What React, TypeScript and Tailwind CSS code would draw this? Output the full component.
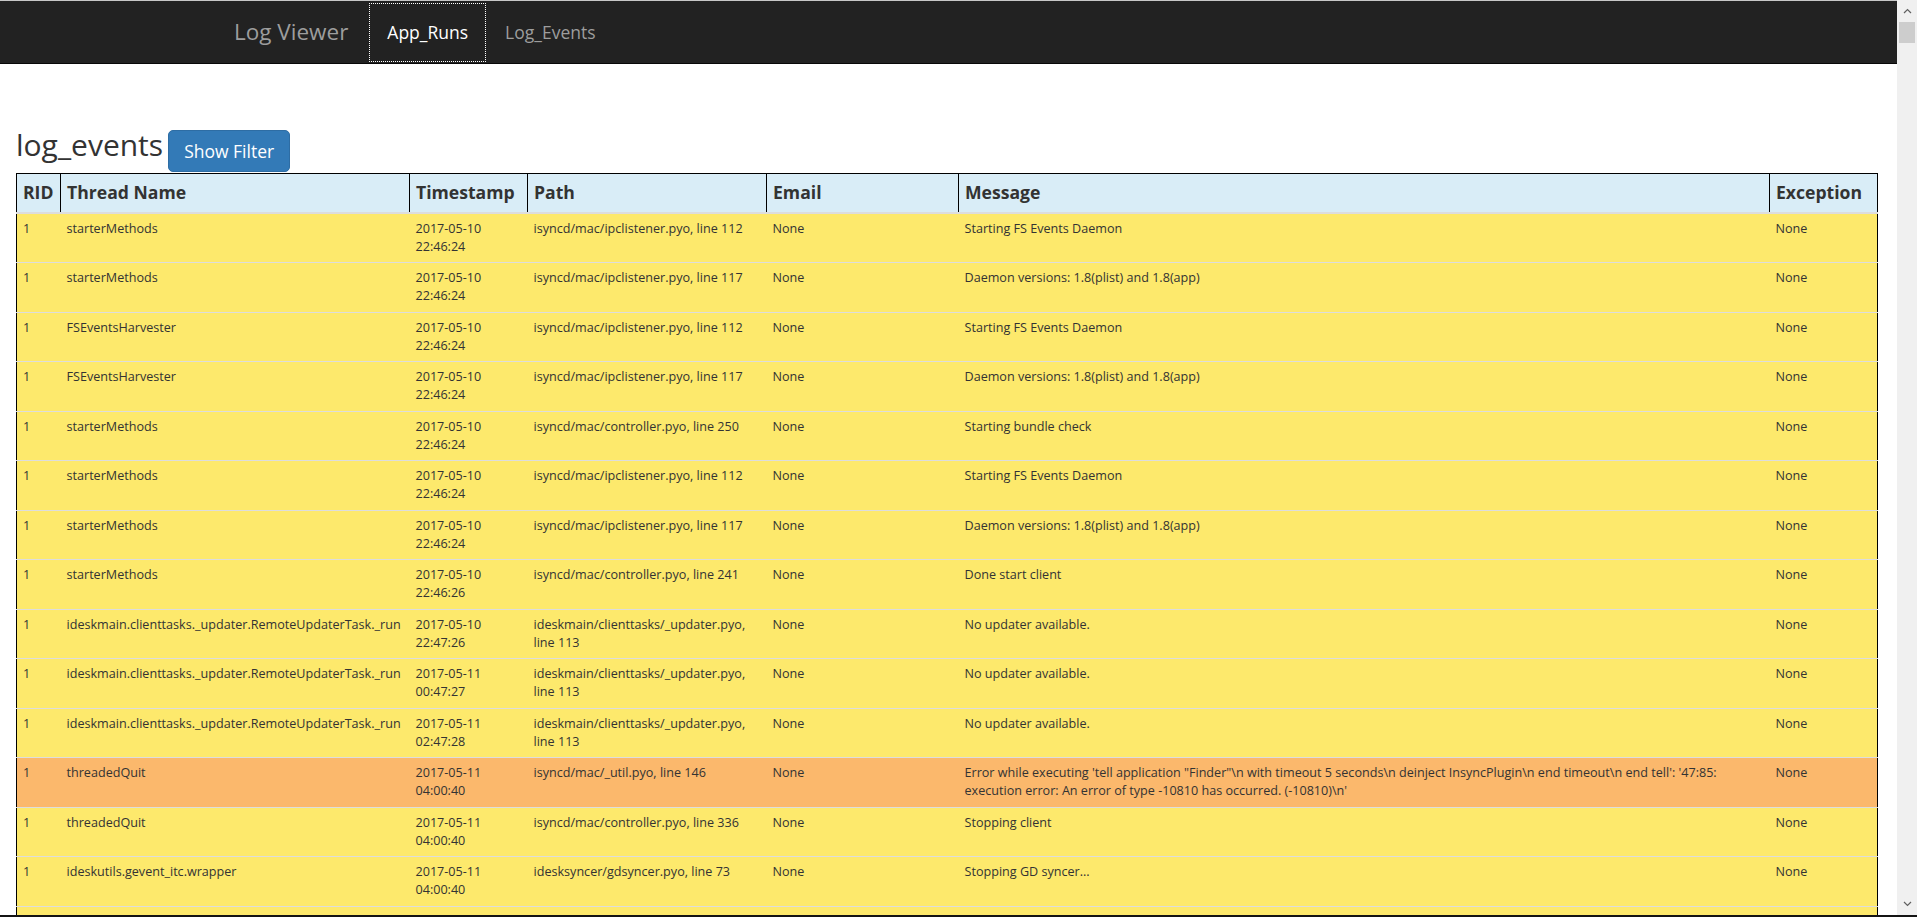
import React from "react";

type LogRow = {
  rid: number;
  thread: string;
  date: string;
  time: string;
  path: string;
  email: string;
  message: string;
  exception: string;
  error?: boolean;
};

const UPDATER = "ideskmain.clienttasks._updater.RemoteUpdaterTask._run";

const ROWS: LogRow[] = [
  { rid: 1, thread: "starterMethods", date: "2017-05-10", time: "22:46:24", path: "isyncd/mac/ipclistener.pyo, line 112", email: "None", message: "Starting FS Events Daemon", exception: "None" },
  { rid: 1, thread: "starterMethods", date: "2017-05-10", time: "22:46:24", path: "isyncd/mac/ipclistener.pyo, line 117", email: "None", message: "Daemon versions: 1.8(plist) and 1.8(app)", exception: "None" },
  { rid: 1, thread: "FSEventsHarvester", date: "2017-05-10", time: "22:46:24", path: "isyncd/mac/ipclistener.pyo, line 112", email: "None", message: "Starting FS Events Daemon", exception: "None" },
  { rid: 1, thread: "FSEventsHarvester", date: "2017-05-10", time: "22:46:24", path: "isyncd/mac/ipclistener.pyo, line 117", email: "None", message: "Daemon versions: 1.8(plist) and 1.8(app)", exception: "None" },
  { rid: 1, thread: "starterMethods", date: "2017-05-10", time: "22:46:24", path: "isyncd/mac/controller.pyo, line 250", email: "None", message: "Starting bundle check", exception: "None" },
  { rid: 1, thread: "starterMethods", date: "2017-05-10", time: "22:46:24", path: "isyncd/mac/ipclistener.pyo, line 112", email: "None", message: "Starting FS Events Daemon", exception: "None" },
  { rid: 1, thread: "starterMethods", date: "2017-05-10", time: "22:46:24", path: "isyncd/mac/ipclistener.pyo, line 117", email: "None", message: "Daemon versions: 1.8(plist) and 1.8(app)", exception: "None" },
  { rid: 1, thread: "starterMethods", date: "2017-05-10", time: "22:46:26", path: "isyncd/mac/controller.pyo, line 241", email: "None", message: "Done start client", exception: "None" },
  { rid: 1, thread: UPDATER, date: "2017-05-10", time: "22:47:26", path: "ideskmain/clienttasks/_updater.pyo, line 113", email: "None", message: "No updater available.", exception: "None" },
  { rid: 1, thread: UPDATER, date: "2017-05-11", time: "00:47:27", path: "ideskmain/clienttasks/_updater.pyo, line 113", email: "None", message: "No updater available.", exception: "None" },
  { rid: 1, thread: UPDATER, date: "2017-05-11", time: "02:47:28", path: "ideskmain/clienttasks/_updater.pyo, line 113", email: "None", message: "No updater available.", exception: "None" },
  {
    rid: 1,
    thread: "threadedQuit",
    date: "2017-05-11",
    time: "04:00:40",
    path: "isyncd/mac/_util.pyo, line 146",
    email: "None",
    message:
      "Error while executing 'tell application \"Finder\"\\n with timeout 5 seconds\\n deinject InsyncPlugin\\n end timeout\\n end tell': '47:85: execution error: An error of type -10810 has occurred. (-10810)\\n'",
    exception: "None",
    error: true,
  },
  { rid: 1, thread: "threadedQuit", date: "2017-05-11", time: "04:00:40", path: "isyncd/mac/controller.pyo, line 336", email: "None", message: "Stopping client", exception: "None" },
  { rid: 1, thread: "ideskutils.gevent_itc.wrapper", date: "2017-05-11", time: "04:00:40", path: "idesksyncer/gdsyncer.pyo, line 73", email: "None", message: "Stopping GD syncer...", exception: "None" },
  { rid: 1, thread: "ideskutils.gevent_itc.wrapper", date: "2017-05-11", time: "04:00:41", path: "idesksyncer/gdsyncer.pyo, line 80", email: "None", message: "GD syncer stopped.", exception: "None" },
];

const COLUMNS = [
  { label: "RID", width: "w-[44px]" },
  { label: "Thread Name", width: "w-[349px]" },
  { label: "Timestamp", width: "w-[118px]" },
  { label: "Path", width: "w-[239px]" },
  { label: "Email", width: "w-[192px]" },
  { label: "Message", width: "w-[811px]" },
  { label: "Exception", width: "w-[108px]" },
];

const cell = "border-t border-[#ddd] px-[6px] py-[6px] align-top text-[12.6px] leading-[18.25px]";

function Navbar() {
  return (
    <div className="shrink-0">
      <div className="h-px bg-[#c8c8c8]" />
      <nav className="flex h-[63px] items-stretch border-b border-[#080808] bg-[#222] pl-[234px]">
        <span className="flex items-center text-[22.5px] leading-none text-[#9d9d9d]">Log Viewer</span>
        <a className="ml-[21px] mb-px mt-[2px] flex items-center border border-dotted border-white px-[17px] text-[17.5px] text-white">
          App_Runs
        </a>
        <a className="flex items-center pl-[19px] text-[17.5px] text-[#9d9d9d]">Log_Events</a>
      </nav>
    </div>
  );
}

function Scrollbar() {
  return (
    <div className="flex w-[20px] shrink-0 flex-col bg-[#f0f0f0]">
      <div className="flex h-[22px] items-center justify-center">
        <svg width="9" height="6" viewBox="0 0 9 6" fill="none" stroke="#606060" strokeWidth="1.2">
          <path d="M1 5 L4.5 1.5 L8 5" />
        </svg>
      </div>
      <div className="mx-[2px] h-[21px] bg-[#cdcdcd]" />
      <div className="flex-1" />
      <div className="flex h-[22px] items-center justify-center">
        <svg width="9" height="6" viewBox="0 0 9 6" fill="none" stroke="#606060" strokeWidth="1.2">
          <path d="M1 1 L4.5 4.5 L8 1" />
        </svg>
      </div>
    </div>
  );
}

function LogTable() {
  return (
    <table className="w-[1861px] table-fixed border-collapse border border-black text-[#333]">
      <colgroup>
        {COLUMNS.map((c) => (
          <col key={c.label} className={c.width} />
        ))}
      </colgroup>
      <thead>
        <tr className="bg-[#d9edf7]">
          {COLUMNS.map((c) => (
            <th
              key={c.label}
              className="border-x border-b-2 border-x-black border-b-[#ddd] px-[6px] py-[6px] text-left align-bottom text-[17.6px] font-bold leading-[25.7px]"
            >
              {c.label}
            </th>
          ))}
        </tr>
      </thead>
      <tbody>
        {ROWS.map((r, i) => (
          <tr key={i} className={r.error ? "bg-[#fbb86c]" : "bg-[#fde96c]"}>
            <td className={cell}>{r.rid}</td>
            <td className={cell}>{r.thread}</td>
            <td className={cell}>
              {r.date}
              <br />
              {r.time}
            </td>
            <td className={cell}>{r.path}</td>
            <td className={cell}>{r.email}</td>
            <td className={cell}>{r.message}</td>
            <td className={cell}>
              {r.exception}
              {!r.error && <br />}
            </td>
          </tr>
        ))}
      </tbody>
    </table>
  );
}

export default function App() {
  return (
    <div className="flex h-[917px] flex-col overflow-hidden bg-white font-['Open_Sans',sans-serif]">
      <div className="flex min-h-0 flex-1">
        <div className="flex min-w-0 flex-1 flex-col overflow-hidden">
          <Navbar />
          <div className="min-h-0 flex-1 overflow-hidden pl-[16px] pt-[66px]">
            {/* Title + filter toggle */}
            <div className="flex h-[42px] items-end">
              <h2 className="mb-[11px] text-[30px] font-normal leading-[33px] text-[#333]">log_events</h2>
              <button
                type="button"
                className="ml-[5px] h-[42px] rounded-[5px] border border-[#2e6da4] bg-[#337ab7] px-[15px] text-[17.5px] leading-[25px] text-white"
              >
                Show Filter
              </button>
            </div>
            <div className="mt-px">
              <LogTable />
            </div>
          </div>
        </div>
        <Scrollbar />
      </div>
      <div className="h-[2px] shrink-0 bg-[#141414]" />
    </div>
  );
}
